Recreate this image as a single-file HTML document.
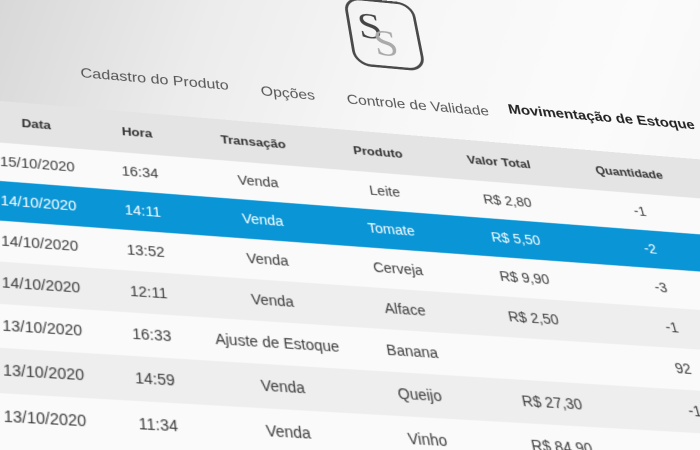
<!DOCTYPE html>
<html><head><meta charset="utf-8"><style>
html,body{margin:0;padding:0;width:700px;height:450px;overflow:hidden;background:#f6f6f6;}
#wrap{position:relative;width:700px;height:450px;overflow:hidden;}
#bg{position:absolute;left:0;top:0;width:700px;height:450px;background:linear-gradient(110deg,#d8d8d8 0%,#ececec 25%,#f7f7f7 50%,#fbfbfb 75%,#f4f4f4 100%);}
#plane{position:absolute;left:0;top:0;width:0;height:0;transform-origin:0 0;
transform:matrix3d(1.007306,0.093228,0,0.00009044,0.012815,0.819792,0,-0.00036553,0,0,1,0,-10.319,9.3746,0,1);
font-family:"Liberation Sans",sans-serif;color:#3c3c3c;}
.band{position:absolute;left:-150px;width:1100px;}
.c{position:absolute;width:200px;text-align:center;font-size:14px;white-space:nowrap;}
.h{font-weight:bold;font-size:13px;color:#333;}
.nav{position:absolute;font-size:16px;color:#555;white-space:nowrap;}
</style></head><body>
<div id="wrap">
<div id="bg"></div>
<div id="plane">
  <div style="position:absolute;left:370px;top:-58px;width:76px;height:86px;border:3px solid #4a4a4a;border-radius:18px;box-sizing:border-box;"></div>
  <div style="position:absolute;left:381px;top:-50px;font-family:'Liberation Serif',serif;font-size:46px;color:#444;">S</div>
  <div style="position:absolute;left:395px;top:-30px;font-family:'Liberation Serif',serif;font-size:46px;color:#aaa;">S</div>
  <div class="nav" style="left:88px;top:58px;">Cadastro do Produto</div>
  <div class="nav" style="left:268px;top:61px;">Opções</div>
  <div class="nav" style="left:356px;top:62px;">Controle de Validade</div>
  <div class="nav" style="left:526px;top:57px;font-weight:bold;color:#222;">Movimentação de Estoque</div>
  <div class="band" style="top:106px;height:46px;background:#e4e4e4;"></div>
  <div class="band" style="top:152px;height:41px;background:#fafafa;border-bottom:1px solid #ddd;"></div>
  <div class="band" style="top:193px;height:41px;background:#0a96d6;"></div>
  <div class="band" style="top:234px;height:41px;background:#fafafa;border-bottom:1px solid #ddd;"></div>
  <div class="band" style="top:275px;height:41px;background:#eeeeee;border-bottom:1px solid #ddd;"></div>
  <div class="band" style="top:316px;height:41px;background:#fafafa;border-bottom:1px solid #ddd;"></div>
  <div class="band" style="top:357px;height:41px;background:#eeeeee;border-bottom:1px solid #ddd;"></div>
  <div class="band" style="top:398px;height:80px;background:#fafafa;"></div>
  <div class="c h" style="left:-57px;top:121px;">Data</div>
  <div class="c h" style="left:40px;top:121px;">Hora</div>
  <div class="c h" style="left:154px;top:121px;">Transação</div>
  <div class="c h" style="left:279px;top:121px;">Produto</div>
  <div class="c h" style="left:403px;top:121px;">Valor Total</div>
  <div class="c h" style="left:540px;top:121px;">Quantidade</div>
  <div style="position:absolute;left:0;top:164px;">
    <div class="c" style="left:-57px;">15/10/2020</div><div class="c" style="left:40px;">16:34</div><div class="c" style="left:154px;">Venda</div><div class="c" style="left:279px;">Leite</div><div class="c" style="left:403px;">R$ 2,80</div><div class="c" style="left:540px;">-1</div>
  </div>
  <div style="position:absolute;left:0;top:205px;color:#fff;">
    <div class="c" style="left:-57px;">14/10/2020</div><div class="c" style="left:40px;">14:11</div><div class="c" style="left:154px;">Venda</div><div class="c" style="left:279px;">Tomate</div><div class="c" style="left:403px;">R$ 5,50</div><div class="c" style="left:540px;">-2</div>
  </div>
  <div style="position:absolute;left:0;top:246px;">
    <div class="c" style="left:-57px;">14/10/2020</div><div class="c" style="left:40px;">13:52</div><div class="c" style="left:154px;">Venda</div><div class="c" style="left:279px;">Cerveja</div><div class="c" style="left:403px;">R$ 9,90</div><div class="c" style="left:540px;">-3</div>
  </div>
  <div style="position:absolute;left:0;top:287px;">
    <div class="c" style="left:-57px;">14/10/2020</div><div class="c" style="left:40px;">12:11</div><div class="c" style="left:154px;">Venda</div><div class="c" style="left:279px;">Alface</div><div class="c" style="left:403px;">R$ 2,50</div><div class="c" style="left:540px;">-1</div>
  </div>
  <div style="position:absolute;left:0;top:328px;">
    <div class="c" style="left:-57px;">13/10/2020</div><div class="c" style="left:40px;">16:33</div><div class="c" style="left:154px;">Ajuste de Estoque</div><div class="c" style="left:279px;">Banana</div><div class="c" style="left:540px;">92</div>
  </div>
  <div style="position:absolute;left:0;top:369px;">
    <div class="c" style="left:-57px;">13/10/2020</div><div class="c" style="left:40px;">14:59</div><div class="c" style="left:154px;">Venda</div><div class="c" style="left:279px;">Queijo</div><div class="c" style="left:403px;">R$ 27,30</div><div class="c" style="left:540px;">-1</div>
  </div>
  <div style="position:absolute;left:0;top:410px;">
    <div class="c" style="left:-57px;">13/10/2020</div><div class="c" style="left:40px;">11:34</div><div class="c" style="left:154px;">Venda</div><div class="c" style="left:279px;">Vinho</div><div class="c" style="left:403px;">R$ 84,90</div><div class="c" style="left:540px;">-1</div>
  </div>
</div>
</div>
</body></html>
